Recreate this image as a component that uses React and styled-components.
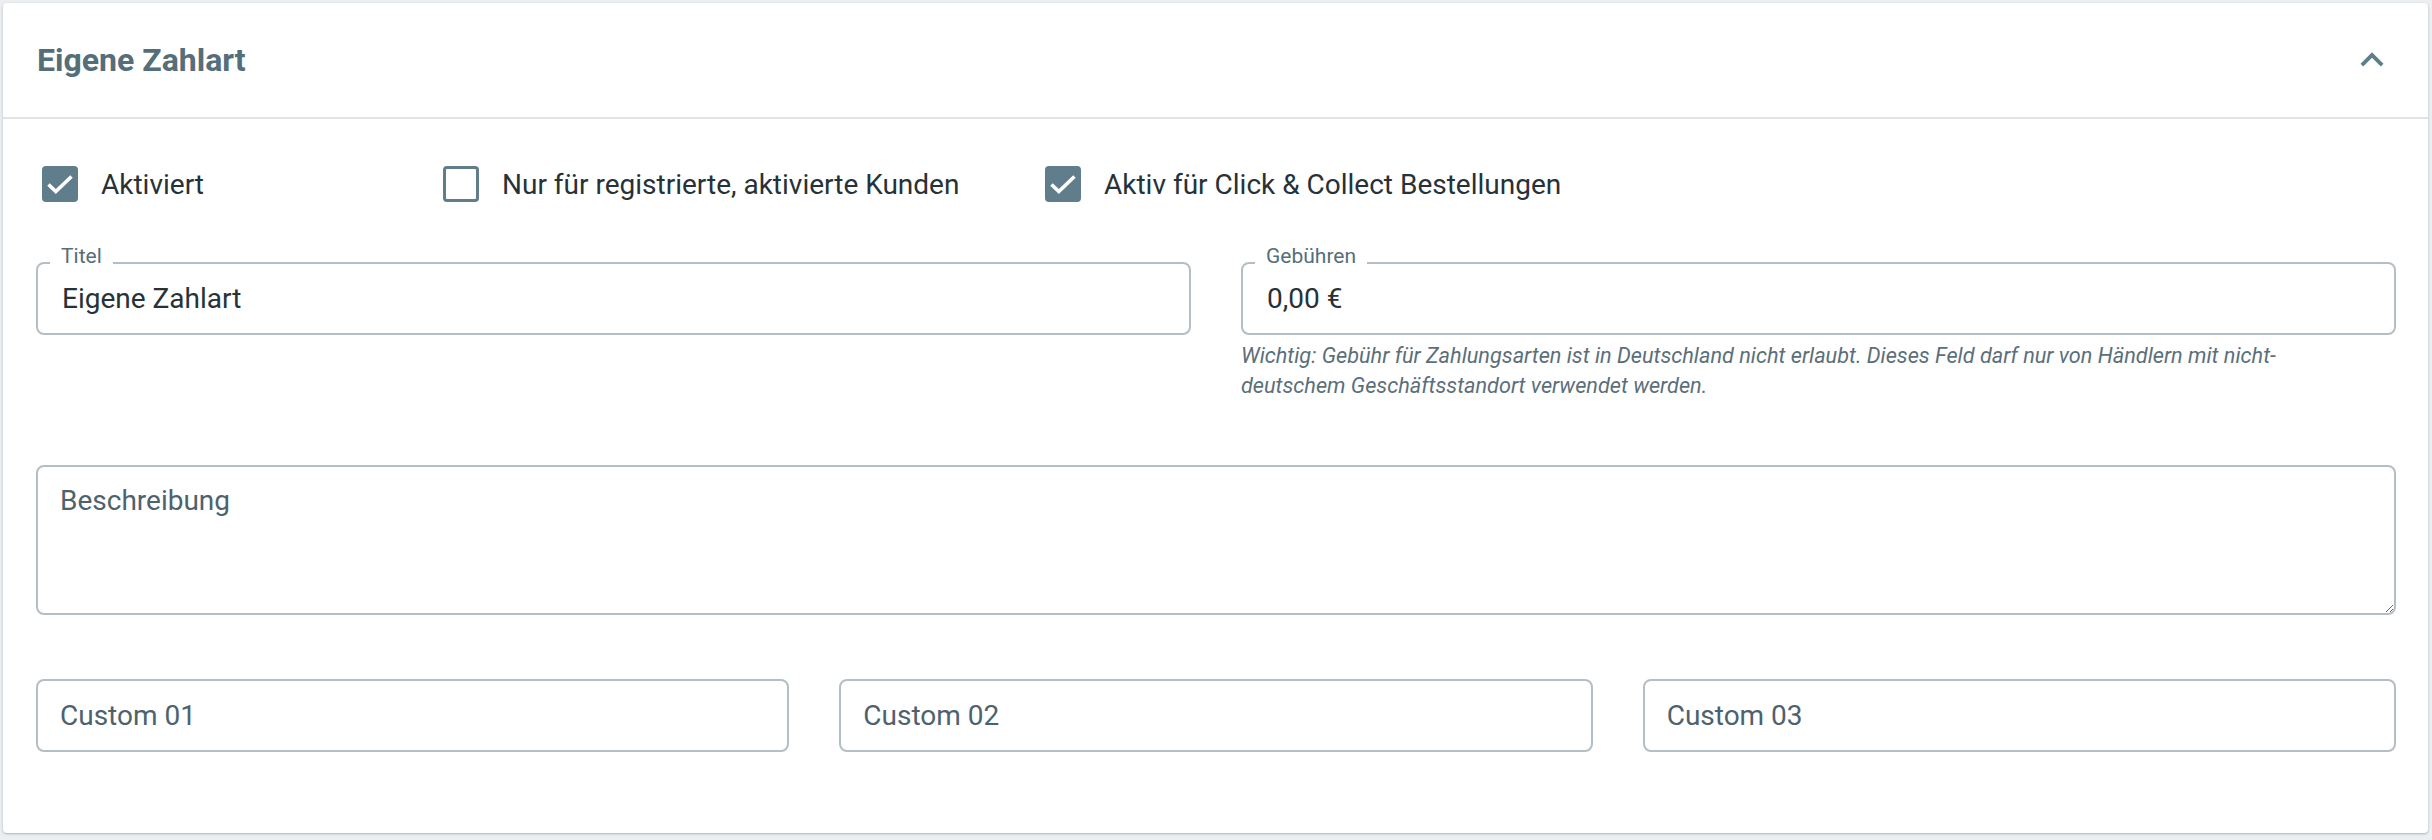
import React from 'react';
import styled, { createGlobalStyle } from 'styled-components';

const GlobalStyle = createGlobalStyle`
  html, body {
    margin: 0;
    padding: 0;
    background: #eceff2;
  }
  body {
    font-family: Roboto, "Noto Sans", "Liberation Sans", sans-serif;
  }
  * {
    box-sizing: border-box;
  }
`;

const Page = styled.div`
  padding: 3px 4px 7px 3px;
`;

const Card = styled.section`
  background: #fff;
  border-radius: 4px;
  box-shadow: 0 1px 3px rgba(0, 0, 0, 0.22), 0 1px 1px rgba(0, 0, 0, 0.06);
`;

const Header = styled.header`
  height: 116px;
  display: flex;
  align-items: center;
  justify-content: space-between;
  padding: 0 33px 0 34px;
  border-bottom: 2px solid #e1e3e5;
`;

const Title = styled.h2`
  margin: 0;
  font-size: 32px;
  font-weight: 700;
  color: #546e7a;
`;

const Toggle = styled.button`
  width: 46px;
  height: 46px;
  padding: 0;
  border: 0;
  background: none;
  color: #607d8b;
  cursor: pointer;
  svg {
    display: block;
  }
`;

const Body = styled.div`
  padding: 47px 32px 81px 33px;
`;

const CheckRow = styled.div`
  display: grid;
  grid-template-columns: 401px 602px auto;
  margin-bottom: 60px;
`;

const CheckItem = styled.label`
  display: flex;
  align-items: center;
  gap: 23px;
  padding-left: 6px;
  height: 36px;
  font-size: 28px;
  color: #263238;
  cursor: pointer;
`;

const Box = styled.span`
  width: 36px;
  height: 36px;
  flex: none;
  border-radius: 4px;
  background: ${p => (p.$checked ? '#607d8b' : '#fff')};
  border: ${p => (p.$checked ? 'none' : '3px solid #607d8b')};
  svg {
    display: block;
  }
`;

const Stack = styled.div`
  display: flex;
  flex-direction: column;
  gap: 64px;
`;

const Grid = styled.div`
  display: grid;
  grid-template-columns: repeat(${p => p.$cols}, 1fr);
  column-gap: 50px;
  align-items: start;
`;

const Field = styled.div`
  position: relative;
`;

const FloatLabel = styled.span`
  position: absolute;
  top: -16px;
  left: 14px;
  padding: 0 11px;
  background: #fff;
  font-size: 21px;
  line-height: 21px;
  color: #546e7a;
`;

const Input = styled.input`
  display: block;
  width: 100%;
  height: 73px;
  padding: 0 ${p => p.$pad || 24}px;
  border: 2px solid #b4bfc5;
  border-radius: 8px;
  font-family: inherit;
  font-size: 28px;
  color: #263238;
  background: #fff;
  outline: none;
  &::placeholder {
    color: #4e626d;
    opacity: 1;
  }
`;

const TextArea = styled.textarea`
  display: block;
  width: 100%;
  height: 150px;
  padding: 14px 22px;
  border: 2px solid #b4bfc5;
  border-radius: 8px;
  font-family: inherit;
  font-size: 28px;
  line-height: 1.4;
  color: #263238;
  outline: none;
  &::placeholder {
    color: #4e626d;
    opacity: 1;
  }
`;

const Hint = styled.p`
  margin: 6px 0 0;
  padding-right: 70px;
  font-size: 21.7px;
  line-height: 30px;
  font-style: italic;
  color: #5b6f7a;
`;

const Check = ({ checked, children }) => (
  <CheckItem>
    <Box $checked={checked}>
      {checked && (
        <svg width="36" height="36" viewBox="0 0 36 36">
          <path
            d="M6.5 18.5 L13.8 25.6 L29.5 10.5"
            fill="none"
            stroke="#fff"
            strokeWidth="3.6"
          />
        </svg>
      )}
    </Box>
    {children}
  </CheckItem>
);

export default function App() {
  return (
    <>
      <GlobalStyle />
      <Page>
        <Card>
          <Header>
            <Title>Eigene Zahlart</Title>
            <Toggle aria-label="Einklappen">
              <svg width="46" height="46" viewBox="0 0 24 24">
                <path
                  fill="currentColor"
                  d="M12 8l-6 6 1.41 1.41L12 10.83l4.59 4.58L18 14z"
                />
              </svg>
            </Toggle>
          </Header>
          <Body>
            <CheckRow>
              <Check checked>Aktiviert</Check>
              <Check>Nur für registrierte, aktivierte Kunden</Check>
              <Check checked>Aktiv für Click &amp; Collect Bestellungen</Check>
            </CheckRow>
            <Stack>
              <Grid $cols={2}>
                <Field>
                  <Input defaultValue="Eigene Zahlart" />
                  <FloatLabel>Titel</FloatLabel>
                </Field>
                <Field>
                  <Input defaultValue="0,00 €" />
                  <FloatLabel>Gebühren</FloatLabel>
                  <Hint>
                    Wichtig: Gebühr für Zahlungsarten ist in Deutschland nicht
                    erlaubt. Dieses Feld darf nur von Händlern mit
                    nicht-deutschem Geschäftsstandort verwendet werden.
                  </Hint>
                </Field>
              </Grid>
              <TextArea placeholder="Beschreibung" />
              <Grid $cols={3}>
                <Input $pad={22} placeholder="Custom 01" />
                <Input $pad={22} placeholder="Custom 02" />
                <Input $pad={22} placeholder="Custom 03" />
              </Grid>
            </Stack>
          </Body>
        </Card>
      </Page>
    </>
  );
}
